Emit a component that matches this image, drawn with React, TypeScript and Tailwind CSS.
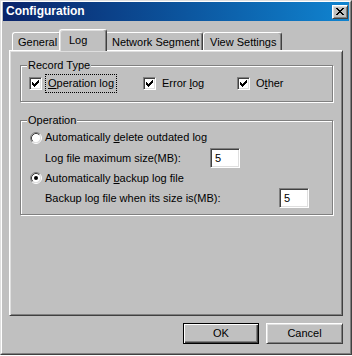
import React from "react"

const raised =
    "border border-t-white border-l-white border-r-[#404040] border-b-[#404040] shadow-[inset_1px_1px_0_#dfdfdf,inset_-1px_-1px_0_#808080]"
const sunken =
    "border border-t-[#808080] border-l-[#808080] border-r-white border-b-white shadow-[inset_1px_1px_0_#404040,inset_-1px_-1px_0_#dfdfdf]"
const etched =
    "border border-[#808080] shadow-[inset_1px_1px_0_#fff,1px_1px_0_#fff]"

function CheckBox() {
    return (
        <span className={`w-[13px] h-[13px] shrink-0 bg-white flex items-center justify-center ${sunken}`}>
            <svg width="7" height="7" viewBox="0 0 7 7" shapeRendering="crispEdges">
                <path
                    d="M0 2h1v3H0z M1 3h1v3H1z M2 4h1v3H2z M3 3h1v3H3z M4 2h1v3H4z M5 1h1v3H5z M6 0h1v3H6z"
                    fill="#000"
                />
            </svg>
        </span>
    )
}

function Radio({ on }: { on?: boolean }) {
    return (
        <svg width="12" height="12" viewBox="0 0 12 12" className="shrink-0">
            <circle cx="6" cy="6" r="4.5" fill="#fff" />
            <path d="M2.11 9.89A5.5 5.5 0 0 1 9.89 2.11" stroke="#808080" fill="none" />
            <path d="M9.89 2.11A5.5 5.5 0 0 1 2.11 9.89" stroke="#fff" fill="none" />
            <path d="M2.82 9.18A4.5 4.5 0 0 1 9.18 2.82" stroke="#404040" fill="none" />
            <path d="M9.18 2.82A4.5 4.5 0 0 1 2.82 9.18" stroke="#dfdfdf" fill="none" />
            {on && <circle cx="6" cy="6" r="2" fill="#000" />}
        </svg>
    )
}

function NumBox({ value }: { value: string }) {
    return (
        <div className={`w-[30px] h-[20px] bg-white pl-[4px] flex items-center ${sunken}`}>
            {value}
        </div>
    )
}

export default function App() {
    return (
        <div className="w-[352px] h-[356px] bg-white font-['Liberation_Sans',Arial,sans-serif] text-[11px] leading-[13px] text-black">
            {/* Window frame */}
            <div className="w-[352px] h-[355px] bg-[#c0c0c0] border border-t-[#dfdfdf] border-l-[#dfdfdf] border-r-[#404040] border-b-[#404040]">
                <div className="h-full border border-t-white border-l-white border-r-[#808080] border-b-[#808080] px-px flex flex-col">
                    {/* Title bar */}
                    <div className="h-[19px] shrink-0 flex items-center justify-between pl-[3px] pr-[1px] bg-linear-to-r from-[#0a246a] to-[#1084d0]">
                        <span className="text-white font-bold text-[12px]">Configuration</span>
                        <button className={`w-[16px] h-[14px] bg-[#c0c0c0] flex items-center justify-center ${raised}`}>
                            <svg width="8" height="7" viewBox="0 0 8 7" shapeRendering="crispEdges">
                                <path
                                    d="M0 0h2v1H0z M6 0h2v1H6z M1 1h2v1H1z M5 1h2v1H5z M2 2h4v1H2z M3 3h2v1H3z M2 4h4v1H2z M1 5h2v1H1z M5 5h2v1H5z M0 6h2v1H0z M6 6h2v1H6z"
                                    fill="#000"
                                />
                            </svg>
                        </button>
                    </div>

                    {/* Tabs */}
                    <div className="mt-[8px] mx-[6px] h-[21px] flex items-end pl-[3px]">
                        <div className="w-[49px] h-[18px] pl-[5px] pt-[3px] border-l border-t border-r border-l-white border-t-white border-r-[#404040] rounded-t-[3px] shadow-[inset_-1px_0_0_#808080]">
                            General
                        </div>
                        <div className="relative z-10 w-[48px] h-[22px] -mx-[2px] -mb-px pl-[9px] pt-[4px] bg-[#c0c0c0] border-l border-t border-r border-l-white border-t-white border-r-[#404040] rounded-t-[3px] shadow-[inset_-1px_0_0_#808080,inset_1px_1px_0_#dfdfdf]">
                            Log
                        </div>
                        <div className="w-[98px] h-[18px] pl-[6px] pt-[3px] border-l border-t border-r border-l-white border-t-white border-r-[#404040] rounded-t-[3px] shadow-[inset_-1px_0_0_#808080]">
                            Network Segment
                        </div>
                        <div className="w-[79px] h-[18px] pl-[6px] pt-[3px] border-l border-t border-r border-l-white border-t-white border-r-[#404040] rounded-t-[3px] shadow-[inset_-1px_0_0_#808080]">
                            View Settings
                        </div>
                    </div>

                    {/* Tab panel */}
                    <div className="mx-[6px] h-[266px] pt-[8px] pl-[10px] pr-[9px] border border-t-white border-l-white border-r-[#404040] border-b-[#404040] shadow-[inset_1px_1px_0_#dfdfdf,inset_-1px_-1px_0_#808080]">
                        <fieldset className={`h-[43px] ${etched}`}>
                            <legend className="ml-[6px] px-px bg-[#c0c0c0]">Record Type</legend>
                            <div className="h-[22px] flex items-center pl-[8px]">
                                <div className="w-[114px] flex items-center gap-[3px]">
                                    <CheckBox />
                                    <span className="px-[2px] py-[2px] border border-dotted border-black">
                                        <u>O</u>peration log
                                    </span>
                                </div>
                                <div className="w-[94px] flex items-center gap-[3px]">
                                    <CheckBox />
                                    <span className="px-[2px] py-[2px] border border-transparent">
                                        Error <u>l</u>og
                                    </span>
                                </div>
                                <div className="flex items-center gap-[3px]">
                                    <CheckBox />
                                    <span className="px-[2px] py-[2px] border border-transparent">
                                        O<u>t</u>her
                                    </span>
                                </div>
                            </div>
                        </fieldset>

                        <fieldset className={`mt-[12px] h-[101px] ${etched}`}>
                            <legend className="ml-[6px] px-px bg-[#c0c0c0]">Operation</legend>
                            <div className="pl-[9px]">
                                <div className="h-[21px] flex items-center gap-[3px]">
                                    <Radio />
                                    <span>
                                        Automatically <u>d</u>elete outdated log
                                    </span>
                                </div>
                                <div className="h-[20px] flex items-center pl-[15px]">
                                    <span className="w-[165px]">Log file maximum size(MB):</span>
                                    <NumBox value="5" />
                                </div>
                                <div className="h-[20px] flex items-center gap-[3px]">
                                    <Radio on />
                                    <span>
                                        Automatically <u>b</u>ackup log file
                                    </span>
                                </div>
                                <div className="h-[20px] flex items-center pl-[15px]">
                                    <span className="w-[234px]">Backup log file when its size is(MB):</span>
                                    <NumBox value="5" />
                                </div>
                            </div>
                        </fieldset>
                    </div>

                    {/* Buttons */}
                    <div className="mt-[7px] mx-[6px] flex justify-end gap-[7px]">
                        <button className="w-[76px] h-[21px] bg-[#c0c0c0] border border-black shadow-[inset_1px_1px_0_#fff,inset_-1px_-1px_0_#404040,inset_-2px_-2px_0_#808080]">
                            OK
                        </button>
                        <button className={`w-[77px] h-[21px] bg-[#c0c0c0] ${raised}`}>Cancel</button>
                    </div>
                </div>
            </div>
        </div>
    )
}
